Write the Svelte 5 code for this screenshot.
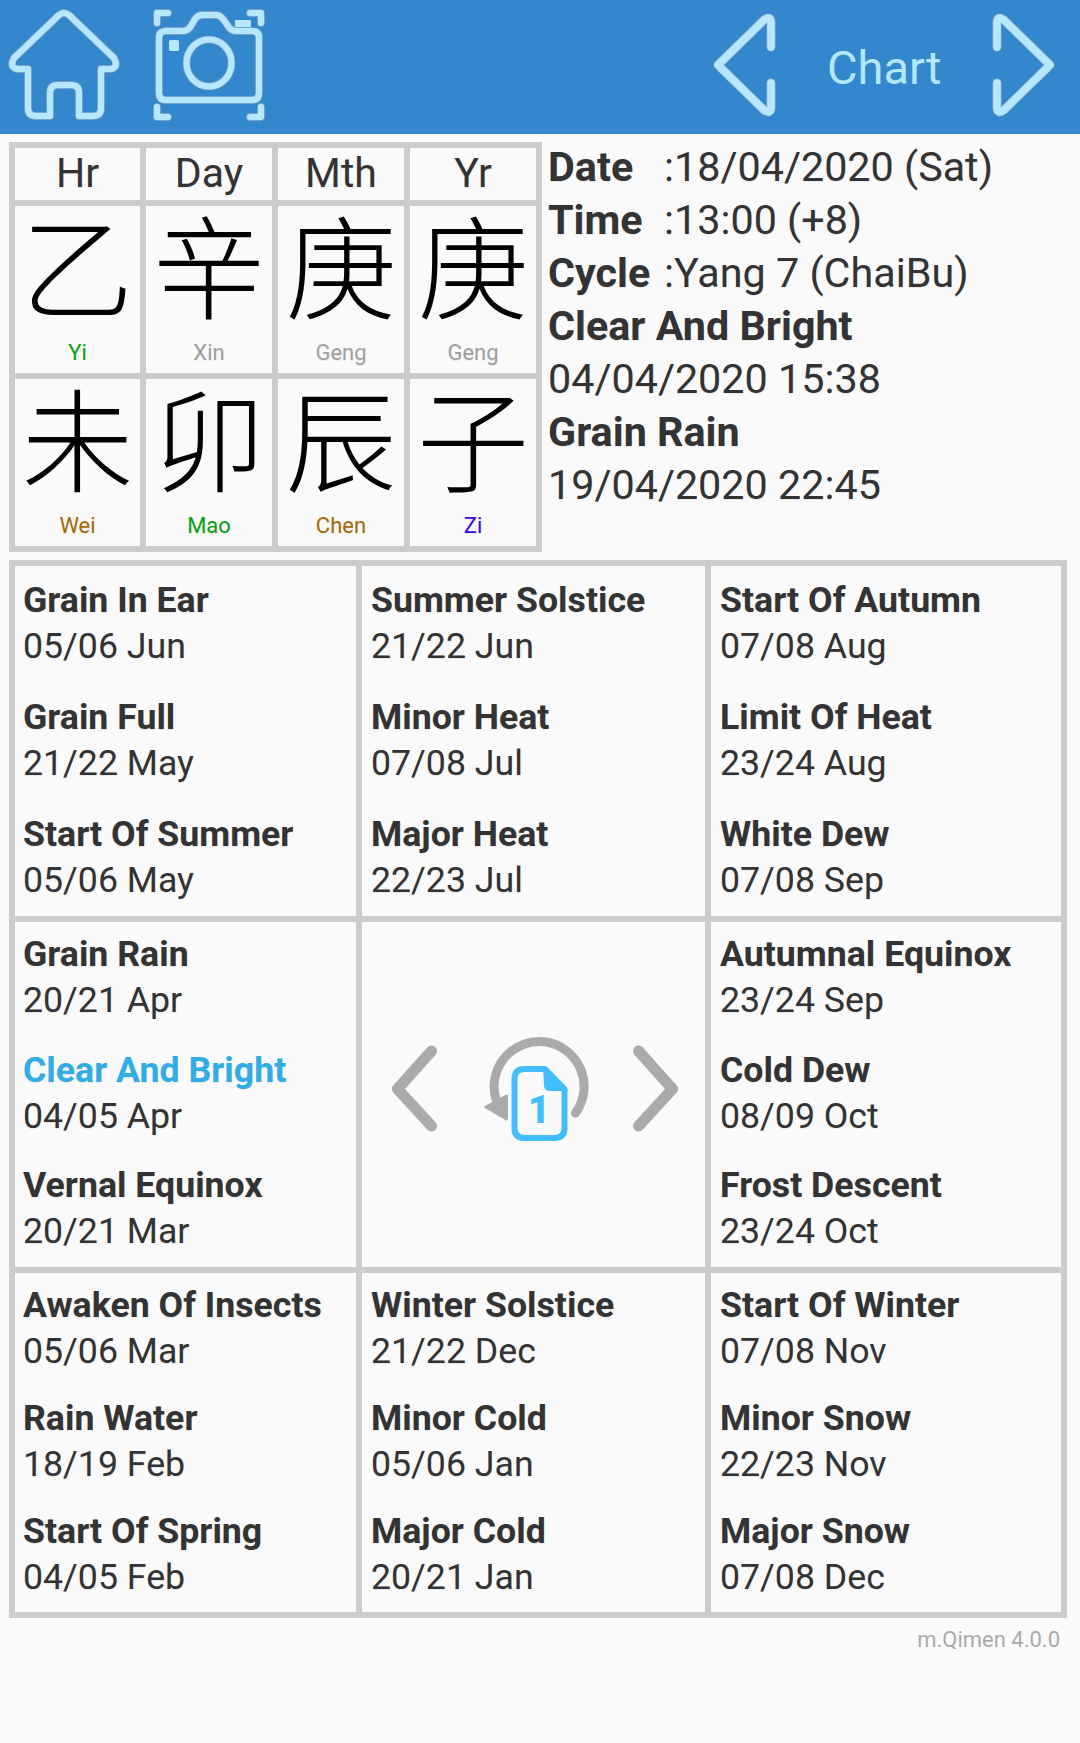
<script>
  const pillars = [
    { head: 'Hr', top: '乙', topName: 'Yi', topTone: 'wood', bottom: '未', bottomName: 'Wei', bottomTone: 'earth' },
    { head: 'Day', top: '辛', topName: 'Xin', topTone: 'metal', bottom: '卯', bottomName: 'Mao', bottomTone: 'wood' },
    { head: 'Mth', top: '庚', topName: 'Geng', topTone: 'metal', bottom: '辰', bottomName: 'Chen', bottomTone: 'earth' },
    { head: 'Yr', top: '庚', topName: 'Geng', topTone: 'metal', bottom: '子', bottomName: 'Zi', bottomTone: 'water' }
  ];
  const rows = [
    { cls: 'r1', cells: [
      [['Grain In Ear', '05/06 Jun'], ['Grain Full', '21/22 May'], ['Start Of Summer', '05/06 May']],
      [['Summer Solstice', '21/22 Jun'], ['Minor Heat', '07/08 Jul'], ['Major Heat', '22/23 Jul']],
      [['Start Of Autumn', '07/08 Aug'], ['Limit Of Heat', '23/24 Aug'], ['White Dew', '07/08 Sep']]
    ]},
    { cls: 'r2', cells: [
      [['Grain Rain', '20/21 Apr'], ['Clear And Bright', '04/05 Apr', true], ['Vernal Equinox', '20/21 Mar']],
      null,
      [['Autumnal Equinox', '23/24 Sep'], ['Cold Dew', '08/09 Oct'], ['Frost Descent', '23/24 Oct']]
    ]},
    { cls: 'r3', cells: [
      [['Awaken Of Insects', '05/06 Mar'], ['Rain Water', '18/19 Feb'], ['Start Of Spring', '04/05 Feb']],
      [['Winter Solstice', '21/22 Dec'], ['Minor Cold', '05/06 Jan'], ['Major Cold', '20/21 Jan']],
      [['Start Of Winter', '07/08 Nov'], ['Minor Snow', '22/23 Nov'], ['Major Snow', '07/08 Dec']]
    ]}
  ];
  const home = 'M59 15 Q64 11 69 15 L114 58 Q119 67 111 69 H101 V108 Q101 116 93 116 H79 V93 Q79 85 71 85 H58 Q50 85 50 93 V116 H36 Q28 116 28 108 V69 H17 Q9 67 14 58 Z';
  const cam = 'M166 31 H183 Q188 31 191 26 L195 19 Q198 15 202 15 H216 Q220 15 223 19 L228 26 Q231 31 236 31 H252 Q259 31 259 38 V93 Q259 100 252 100 H166 Q159 100 159 93 V38 Q159 31 166 31 Z';
  const brackets = 'M168 13 H157 V23 M250 13 H261 V23 M157 107 V117 H168 M261 107 V117 H250';
  const left = 'M771 47 V23 Q771 15 764 20 L718 65 L764 110 Q771 115 771 107 V83';
  const right = 'M997 47 V23 Q997 15 1004 20 L1050 65 L1004 110 Q997 115 997 107 V83';
</script>

<div class="page">
  <header class="bar">
    <svg class="bar-art" width="1080" height="134" viewBox="0 0 1080 134" fill="none" stroke-linecap="round" stroke-linejoin="round">
      <g class="under">
        <path d={home} /><path d={cam} /><path d={brackets} />
        <ellipse cx="209" cy="63" rx="22.5" ry="23.5" />
        <path d={left} class="thick" /><path d={right} class="thick" />
      </g>
      <g class="over">
        <path d={home} /><path d={cam} /><path d={brackets} />
        <ellipse cx="209" cy="63" rx="22.5" ry="23.5" />
        <path d={left} class="thick" /><path d={right} class="thick" />
      </g>
      <rect class="solid" x="169" y="40" width="10" height="11" rx="1.5" />
      <rect class="solid" x="235" y="20" width="16" height="7" rx="1" />
    </svg>
    <span class="title">Chart</span>
  </header>

  <section class="top">
    <div class="pillars">
      {#each pillars as p}
        <div class="head">{p.head}</div>
      {/each}
      {#each pillars as p}
        <div class="stem">
          <span class="han">{p.top}</span>
          <span class="name {p.topTone}">{p.topName}</span>
        </div>
      {/each}
      {#each pillars as p}
        <div class="stem">
          <span class="han">{p.bottom}</span>
          <span class="name {p.bottomTone}">{p.bottomName}</span>
        </div>
      {/each}
    </div>
    <div class="info">
      <div><b class="lbl">Date</b>:18/04/2020 (Sat)</div>
      <div><b class="lbl">Time</b>:13:00 (+8)</div>
      <div><b class="lbl">Cycle</b>:Yang 7 (ChaiBu)</div>
      <div><b>Clear And Bright</b></div>
      <div>04/04/2020 15:38</div>
      <div><b>Grain Rain</b></div>
      <div>19/04/2020 22:45</div>
    </div>
  </section>

  <section class="terms">
    {#each rows as row}
      {#each row.cells as cell}
        {#if cell}
          <div class="cell {row.cls}">
            {#each cell as t}
              <div class="term">
                <div class="t-name" class:active={t[2]}>{t[0]}</div>
                <div class="t-date">{t[1]}</div>
              </div>
            {/each}
          </div>
        {:else}
          <div class="mid">
            <svg width="343" height="120" viewBox="0 0 343 120" fill="none">
              <path class="chev" d="M69.5 17 L35.5 55 L69.5 92" />
              <path class="chev" d="M276.5 17 L310.5 55 L276.5 92" />
              <path class="ring" d="M213.5 79 A45 45 0 1 0 134.5 67" />
              <path class="head-tip" d="M124 73 L144.5 62 L144.5 85 Z" />
              <path class="doc" d="M162.5 35 Q152.5 35 152.5 45 V94 Q152.5 104 162.5 104 H192.5 Q202.5 104 202.5 94 V55 L183 35 Z" />
              <path class="fold" d="M181 32 L206 57 H188 Q182 57 182 51 Z" />
              <text class="num" x="177" y="89">1</text>
            </svg>
          </div>
        {/if}
      {/each}
    {/each}
  </section>

  <footer class="ver">m.Qimen 4.0.0</footer>
</div>

<style>
  :global(body) { margin: 0; background: #fafafa; }
  .page {
    width: 1080px; height: 1743px; overflow: hidden;
    background: #fafafa; color: #333;
    font-family: Roboto, "Noto Sans CJK TC", sans-serif;
    text-shadow: 0 1px 1px rgba(0,0,0,.08);
  }
  .bar { position: relative; height: 134px; background: #3387cc; }
  .bar-art { position: absolute; left: 0; top: 0; }
  .under path, .under ellipse { stroke: #8fabc6; stroke-width: 7.5; }
  .over path, .over ellipse { stroke: #b5e7fe; stroke-width: 6; }
  .under .thick { stroke-width: 9; }
  .over .thick { stroke-width: 7.5; }
  .solid { fill: #b5e7fe; }
  .title { position: absolute; left: 827px; top: 41px; font-size: 47px; line-height: 54px; color: #b3e5fc; text-shadow: none; }

  .top { display: flex; padding: 8px 0 0 9px; }
  .pillars {
    display: grid; grid-template-columns: 125px 126px 126px 126px; grid-template-rows: 52px 167px 167px;
    gap: 6px; padding: 6px; background: #ccc;
  }
  .head, .stem { background: #fafafa; text-align: center; }
  .head { font-size: 41px; line-height: 50px; }
  .stem { display: flex; flex-direction: column; align-items: center; }
  .han { font-size: 112px; line-height: 113px; color: #000; font-weight: 300; font-family: "Noto Sans CJK TC", sans-serif; text-shadow: none; }
  .name { font-size: 22px; line-height: 26px; margin-top: 21px; }
  .wood { color: #0a9f12; }
  .metal { color: #a0a0a0; }
  .earth { color: #a66a06; }
  .water { color: #3a06e6; }

  .info { margin-left: 6px; font-size: 41.3px; line-height: 53px; white-space: nowrap; margin-top: -1px; }
  .lbl { display: inline-block; width: 116px; }
  b { font-weight: 700; }

  .terms {
    display: grid; grid-template-columns: 341px 343px 350px; grid-template-rows: 350px 345px 339px;
    gap: 6px; padding: 6px; background: #ccc; width: 1046px; margin: 8px 0 0 9px;
  }
  .cell { background: #fafafa; padding: 11px 8px 0; }
  .cell:nth-child(3n+2), .cell:nth-child(3n) { padding-left: 9px; }
  .r2 { padding-top: 9px; }
  .r3 { padding-top: 9px; }
  .term { height: 117px; }
  .r2 .term { height: 115.5px; }
  .r3 .term { height: 113px; }
  .t-name { font-size: 35.7px; line-height: 46px; font-weight: 700; white-space: nowrap; }
  .t-name.active { color: #32ace4; }
  .t-date { font-size: 35.7px; line-height: 46px; white-space: nowrap; }
  .mid { background: #fafafa; display: flex; align-items: center; justify-content: center; }
  .mid svg { flex: none; margin-top: -2px; }
  .chev { stroke: #aaa; stroke-width: 11; stroke-linecap: round; stroke-linejoin: round; }
  .ring { stroke: #aaa; stroke-width: 9; stroke-linecap: round; }
  .head-tip { fill: #aaa; stroke: #aaa; stroke-width: 3; stroke-linejoin: round; }
  .doc { stroke: #42bdfd; stroke-width: 6; fill: #fafafa; stroke-linejoin: round; }
  .fold { fill: #42bdfd; }
  .num { fill: #42bdfd; font: 900 38px Roboto, sans-serif; text-anchor: middle; text-shadow: none; }

  .ver { text-align: right; font-size: 22px; line-height: 26px; color: #aaa; padding: 9px 20px 0 0; text-shadow: none; }
</style>
